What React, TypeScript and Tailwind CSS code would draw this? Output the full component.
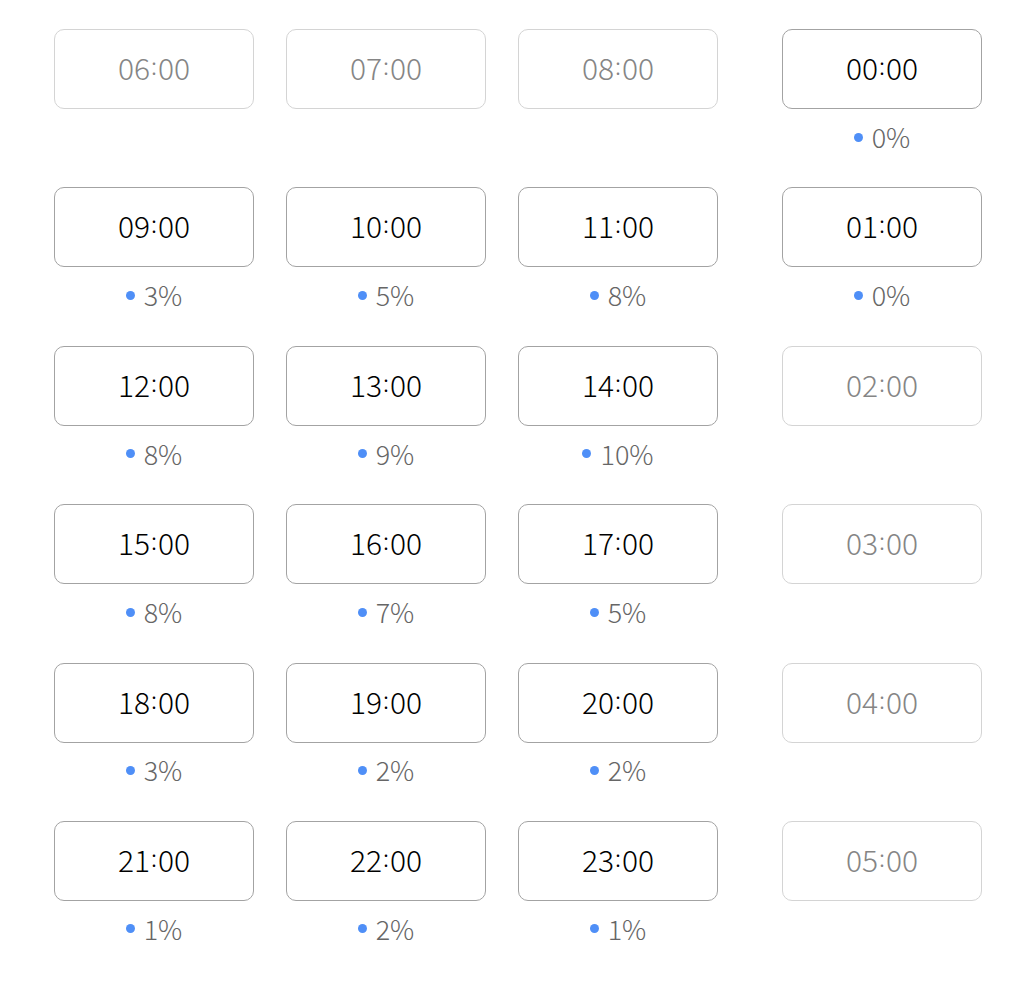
import React from 'react';

type Slot = { time: string; pct?: string };

const LEFT: Slot[] = [
  { time: '06:00' },
  { time: '07:00' },
  { time: '08:00' },
  { time: '09:00', pct: '3%' },
  { time: '10:00', pct: '5%' },
  { time: '11:00', pct: '8%' },
  { time: '12:00', pct: '8%' },
  { time: '13:00', pct: '9%' },
  { time: '14:00', pct: '10%' },
  { time: '15:00', pct: '8%' },
  { time: '16:00', pct: '7%' },
  { time: '17:00', pct: '5%' },
  { time: '18:00', pct: '3%' },
  { time: '19:00', pct: '2%' },
  { time: '20:00', pct: '2%' },
  { time: '21:00', pct: '1%' },
  { time: '22:00', pct: '2%' },
  { time: '23:00', pct: '1%' },
];

const RIGHT: Slot[] = [
  { time: '00:00', pct: '0%' },
  { time: '01:00', pct: '0%' },
  { time: '02:00' },
  { time: '03:00' },
  { time: '04:00' },
  { time: '05:00' },
];

// hour and minutes with the raised colon used in the design
const TimeLabel: React.FC<{ time: string }> = ({ time }) => {
  const [h, m] = time.split(':');
  return (
    <span>
      {h}
      <span className="relative -top-[5px] text-[24px] mx-[1px]">:</span>
      {m}
    </span>
  );
};

const SlotCell: React.FC<{ slot: Slot }> = ({ slot }) => {
  const active = slot.pct !== undefined;
  return (
    <div className="flex flex-col items-center">
      <div
        className={
          active
            ? 'w-full h-20 pb-[3px] rounded-[10px] border border-[#a3a3a3] flex items-center justify-center text-[30px] font-light text-black'
            : 'w-full h-20 pb-[3px] rounded-[10px] border border-[#d4d4d4] flex items-center justify-center text-[30px] font-light text-[#858585]'
        }
      >
        <TimeLabel time={slot.time} />
      </div>
      {active && (
        <div className="mt-[13px] h-[30px] flex items-center gap-[9px] text-[27px] font-light text-[#666666]">
          <span className="w-[9px] h-[9px] rounded-full bg-[#4f8ff7]" />
          <span>{slot.pct}</span>
        </div>
      )}
    </div>
  );
};

const App: React.FC = () => {
  return (
    <div
      className="w-[1020px] min-h-[984px] bg-white pt-[29px] pl-[54px] flex gap-[64px]"
      style={{ fontFamily: '"Noto Sans CJK JP", "Noto Sans", sans-serif' }}
    >
      <div className="grid grid-cols-[200px_200px_200px] gap-x-[32px] gap-y-[34.4px] auto-rows-[124px]">
        {LEFT.map((s) => (
          <SlotCell key={s.time} slot={s} />
        ))}
      </div>
      <div className="grid grid-cols-[200px] gap-y-[34.4px] auto-rows-[124px]">
        {RIGHT.map((s) => (
          <SlotCell key={s.time} slot={s} />
        ))}
      </div>
    </div>
  );
};

export default App;
